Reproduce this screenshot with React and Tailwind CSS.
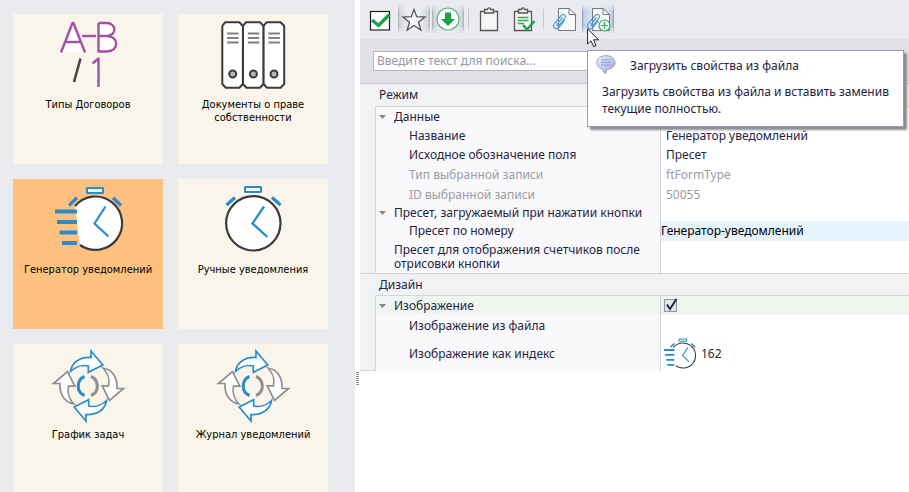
import React from "react";

const BLUE = "#2a8ccf";
const DARK = "#3b3b3b";
const PURPLE = "#a352a3";

function TypesIcon() {
  return (
    <svg width="80" height="80" viewBox="48 18 80 80" fill="none" aria-hidden="true">
      <path d="M73 23L62 52H84Z" fill="#fff" />
      <path d="M99 23H106C116 24 115 35 109 36C119 39 117 51 108 51H99Z" fill="#fff" />
      <path d="M93 64L98 59V82Z" fill="#fff" />
      <g stroke={PURPLE} strokeWidth="2.4" strokeLinejoin="round">
        <path d="M61 52.500L72.500 23H73.500L85 52.500M65.500 42H81" />
        <path d="M82 36H96" />
        <path d="M98.500 23H106.500C117 23 117 36 106.500 36H98.500M106.500 36C119.500 36 119.500 51.500 106.500 51.500H98.500V23" />
        <path d="M92.500 63.500L98.500 58.500V87" />
      </g>
      <path d="M80.500 58.500L74 82" stroke="#4a4a4a" strokeWidth="2.600" />
    </svg>
  );
}

function BinderIcon() {
  return (
    <svg width="80" height="80" viewBox="213 18 80 80" fill="none" aria-hidden="true">
      {[222.3, 243, 263.6].map((x) => (
        <g key={x}>
          <path
            d={`M${x + 3} 22.200H${x + 17}L${x + 20.6} 26V84L${x + 17} 87.800H${x + 3.500}L${x} 84V26Z`}
            fill="#fff"
            stroke={DARK}
            strokeWidth="2"
            strokeLinejoin="round"
          />
          <path d={`M${x + 4.800} 33.500h11.500m-11.500 4.500h11.500m-11.500 4.600h11.500`} stroke="#808080" strokeWidth="2" />
          <circle cx={x + 10.4} cy="74" r="3.500" fill="#b5b5b5" stroke={DARK} strokeWidth="2" />
        </g>
      ))}
    </svg>
  );
}

function ClockIcon() {
  return (
    <svg width="80" height="80" viewBox="213 183 80 80" fill="none" aria-hidden="true">
      <circle cx="253.300" cy="223.300" r="27.200" fill="#fff" stroke={DARK} strokeWidth="2.200" />
      <rect x="245" y="187" width="16" height="5" rx="0.500" stroke={BLUE} strokeWidth="2" />
      <path d="M226.500 205L235 197.500M272 197.500L280.500 205" stroke={BLUE} strokeWidth="3.400" />
      <path d="M264 206.500L252.500 223.500L267.500 237" stroke={BLUE} strokeWidth="2.300" />
    </svg>
  );
}

function FastClockIcon({ small = false }) {
  return (
    <svg
      width={small ? 32 : 80}
      height={small ? 32 : 80}
      viewBox={small ? "55 186 68 68" : "48 183 80 80"}
      fill="none"
      className="shrink-0"
      aria-hidden="true"
    >
      <path d="M75 206A26.500 26.500 0 1 1 80 245Z" fill="#fff" />
      <path d="M75 206A26.700 26.700 0 1 1 80 245" stroke={DARK} strokeWidth="2.200" />
      <rect x="87" y="188" width="16" height="5" rx="0.500" fill="#fff" stroke={BLUE} strokeWidth="2.200" />
      <path d="M69 205.500L77 197.800M113 197.800L121 205.500" stroke={BLUE} strokeWidth="3.300" />
      <path d="M105.500 206.500L94.500 223.500L108.500 236.500" stroke={BLUE} strokeWidth="2.200" />
      <path d="M55 211.500H77M57 222H77M59.500 232.500H77M62 243H77" stroke={BLUE} strokeWidth="3.800" />
    </svg>
  );
}

function CycleIcon() {
  const arrow = "M70.500 371.500C72 362 80 357 91 357.500V351L102.800 365L88.300 372.300V366C82 364.500 75 367 70.500 371.500Z";
  return (
    <svg width="80" height="80" viewBox="48 348 80 80" fill="none" aria-hidden="true">
      <g fill="#fff" strokeWidth="1.700">
        <path d={arrow} stroke="#8f8f8f" transform="rotate(90 88.500 386)" />
        <path d={arrow} stroke="#8f8f8f" transform="rotate(270 88.500 386)" />
        <path d={arrow} stroke={BLUE} />
        <path d={arrow} stroke={BLUE} transform="rotate(180 88.500 386)" />
      </g>
      <path d="M84.500 376.500A10.300 10.300 0 0 0 84.500 395.500" stroke={BLUE} strokeWidth="3" />
      <path d="M91 376.500A10.300 10.300 0 0 1 91 395.500" stroke="#8f8f8f" strokeWidth="3" />
    </svg>
  );
}

const tiles = [
  { lines: ["Типы Договоров"], Icon: TypesIcon },
  { lines: ["Документы о праве", "собственности"], Icon: BinderIcon },
  { lines: ["Генератор уведомлений"], Icon: FastClockIcon, active: true },
  { lines: ["Ручные уведомления"], Icon: ClockIcon },
  { lines: ["График задач"], Icon: CycleIcon },
  { lines: ["Журнал уведомлений"], Icon: CycleIcon },
];

function Tile({ lines, Icon, active }) {
  return (
    <button
      type="button"
      className={`flex h-[150px] w-[150px] flex-col items-center pt-1 text-center font-['DejaVu_Sans_Condensed','DejaVu_Sans',sans-serif] text-[11px] leading-[13px] whitespace-nowrap text-black ${active ? "bg-[#ffc180]" : "bg-[#f9f5ea]"}`}
    >
      <Icon />
      {lines.map((line) => (
        <span key={line}>{line}</span>
      ))}
    </button>
  );
}

const pressedGray =
  "bg-[linear-gradient(to_bottom,#eaebef,transparent_25%,transparent_75%,#eaebef),linear-gradient(to_right,#a9adb8,#d3d6dd_2px,#eceef1_10px,#f1f2f4_16px,#eceef1_22px,#d3d6dd_30px,#a9adb8)]";
const pressedBlue =
  "bg-[linear-gradient(to_bottom,#eaebef,transparent_25%,transparent_75%,#eaebef),linear-gradient(to_right,#8f96aa,#c5d0ea_2px,#d9e1f5_10px,#e4eaf8_16px,#d9e1f5_22px,#c5d0ea_30px,#8f96aa)]";

function ToolButton({ label, className = "", children }) {
  return (
    <button type="button" aria-label={label} className={`flex h-[30px] w-8 items-center justify-center ${className}`}>
      <svg width="26" height="26" viewBox="0 0 26 26" fill="none" aria-hidden="true">
        {children}
      </svg>
    </button>
  );
}

function Separator() {
  return (
    <div className="flex h-[30px] w-[5px] justify-center">
      <div className="w-px bg-[linear-gradient(to_bottom,transparent,#c6c8cf_30%,#c6c8cf_70%,transparent)]" />
    </div>
  );
}

const clipboard = "M4.500 5.500H8.500V3.500H11.500C11.500 1.200 14.500 1.200 14.500 3.500H17.500V5.500H21.500V24.500H4.500Z M8.500 5.500V7H17.500V5.500";

function FileClip() {
  return (
    <>
      <path d="M7.500 2.500H18L24.500 8.500V24.500H7.500Z" fill="#fafafa" stroke="#777" />
      <path d="M18 2.500V8.500H24.500" stroke="#777" />
      <path
        d="M11.500 11.500L6.500 17.500C5.200 19.200 7 20.400 8.200 19L13.800 12.300C16 9.600 12.500 6.800 10.300 9.500L3.500 17.500C0.600 21.200 5.200 24.700 8 21.300L13.500 14.600"
        stroke="#4b9fd8"
        strokeWidth="1.200"
      />
    </>
  );
}

function Tooltip() {
  return (
    <div
      role="tooltip"
      className="absolute top-[46px] left-[5px] z-10 w-[317px] border border-[#9a9cab] bg-white px-[14px] pt-1 pb-[9px] text-[12px] leading-[17px] text-[#25233f] shadow-[3px_3px_2px_#8a8c93]"
    >
      <div className="-ml-[6px] flex items-center gap-[14px]">
        <svg width="20" height="20" viewBox="0 0 20 20" aria-hidden="true">
          <defs>
            <linearGradient id="bubble" x1="0" y1="0" x2="1" y2="1">
              <stop offset="0" stopColor="#f2f3ff" />
              <stop offset="0.600" stopColor="#c0c2f2" />
              <stop offset="1" stopColor="#8d8fd0" />
            </linearGradient>
          </defs>
          <path
            d="M10 0.700C15 0.700 19 3.500 19 7.700C19 11.500 15 14 10.800 14.300L9.500 19L5.500 13.700C2.500 12.500 0.800 10.500 0.800 7.700C0.800 3.500 5 0.700 10 0.700Z"
            fill="url(#bubble)"
            stroke="#9a9bb8"
          />
          <path d="M5 5H14.500M5 7.500H14.500M5 10H14.500" stroke="#9a9cc4" />
        </svg>
        <span>Загрузить свойства из файла</span>
      </div>
      <p className="mt-2 whitespace-nowrap">
        Загрузить свойства из файла и вставить заменив
        <br />
        текущие полностью.
      </p>
    </div>
  );
}

function Cursor() {
  return (
    <svg className="pointer-events-none absolute top-6 left-[5px] z-20" width="14" height="21" viewBox="0 0 14 21" aria-hidden="true">
      <path d="M0.600 0.800V16L4 12.800L6.700 18.700L9 17.600L6.500 11.800H11.500Z" fill="#fff" stroke="#222" />
    </svg>
  );
}

function Toolbar() {
  return (
    <div className="flex h-[39px] items-start gap-[2px] bg-[#eaebef] pt-1 pl-1">
      <ToolButton label="Применить">
        <rect x="3.500" y="5.500" width="19" height="18.500" fill="#fff" stroke="#222" strokeWidth="1.200" />
        <path d="M5 14L11.500 19.500L22.500 8.500" stroke="#17a349" strokeWidth="3.400" />
      </ToolButton>
      <ToolButton label="Избранное" className={pressedGray}>
        <path
          d="M13 3.500L15.700 10.700L24 11L17.500 16.200L19.900 24.200L13 19.500L6.100 24.200L8.500 16.200L2 11L10.300 10.700Z"
          fill="#f4f5f6"
          stroke="#555"
          strokeWidth="1.300"
        />
      </ToolButton>
      <ToolButton label="Загрузить" className={pressedGray}>
        <circle cx="13" cy="13" r="11" fill="#fff" stroke="#57b877" strokeWidth="1.200" />
        <path d="M10 6.500H16V13H20L13 20L6 13H10Z" fill="#17a349" />
      </ToolButton>
      <Separator />
      <ToolButton label="Вставить">
        <path d={clipboard} fill="#f4f5f7" stroke="#555" strokeWidth="1.300" />
      </ToolButton>
      <ToolButton label="Вставить с проверкой">
        <path d={clipboard} fill="#f4f5f7" stroke="#555" strokeWidth="1.300" />
        <path d="M7.500 11.500H18.500M7.500 14.500H18.500M7.500 17.500H14" stroke="#35ac5e" strokeWidth="1.400" />
        <path d="M13 19L17 23.500L24.500 15" stroke="#17a349" strokeWidth="2.400" />
      </ToolButton>
      <Separator />
      <ToolButton label="Сохранить свойства в файл">
        <FileClip />
      </ToolButton>
      <div className="relative">
        <ToolButton label="Загрузить свойства из файла" className={pressedBlue}>
          <FileClip />
          <circle cx="19.500" cy="19.500" r="5.500" fill="#f3f8f4" stroke="#35ac5e" strokeWidth="1.200" />
          <path d="M19.500 16V23M16 19.500H23" stroke="#35ac5e" strokeWidth="1.200" />
        </ToolButton>
        <Cursor />
        <Tooltip />
      </div>
    </div>
  );
}

function Group({ children }) {
  return (
    <button type="button" aria-expanded="true" className="flex items-center gap-2 pl-[3px] text-left">
      <svg width="7" height="4" viewBox="0 0 7 4" aria-hidden="true">
        <path d="M0 0H7L3.500 4Z" fill="#85878f" />
      </svg>
      {children}
    </button>
  );
}

function Row({ height, label, tone = "bg-[#f9f9fb]", valueTone = "bg-white", children }) {
  return (
    <tr className={height}>
      <th scope="row" className={`border-r border-[#d3d4da] p-0 text-left align-middle font-normal ${tone}`}>
        {label}
      </th>
      <td className={`p-0 align-middle ${valueTone}`}>{children}</td>
    </tr>
  );
}

function Field({ id, value, disabled, className = "pl-[5px]" }) {
  return (
    <input
      id={id}
      type="text"
      defaultValue={value}
      disabled={disabled}
      className={`block h-[14px] w-full bg-transparent leading-[14px] outline-none disabled:text-[#9b9ca3] ${className}`}
    />
  );
}

function Grid({ children, last = false }) {
  return (
    <div className="flex">
      <div className={`w-[15px] shrink-0 ${last ? "border-b border-[#d3d4da]" : ""}`} />
      <div className="min-w-0 flex-1 border-t border-l border-[#d3d4da]">
        <table className="w-full table-fixed border-separate border-spacing-0">
          <colgroup>
            <col className="w-[285px]" />
            <col />
          </colgroup>
          <tbody>{children}</tbody>
        </table>
      </div>
    </div>
  );
}

export default function App() {
  return (
    <div className="flex h-screen overflow-hidden bg-white font-['Noto_Sans','Open_Sans',sans-serif] text-[12px] leading-[14px] text-[#25233f]">
      <nav className="w-[355px] shrink-0 overflow-hidden bg-[#eaebef]">
        <div className="grid grid-cols-[150px_150px] content-start gap-[15px] pt-[14px] pl-[13px]">
          {tiles.map((t) => (
            <Tile key={t.lines[0]} {...t} />
          ))}
        </div>
      </nav>

      <div className="w-[5px] shrink-0 pt-[372px] pl-px">
        <div className="h-[14px] w-[3px] bg-[repeating-linear-gradient(to_bottom,#8c8c92_0_1px,#ffffff_1px_2px)]" />
      </div>

      <main className="min-w-0 flex-1">
        <Toolbar />
        <div className="h-[45px] border-b border-[#c9cad2] bg-[#e0e1e6] px-[13px] pt-3">
          <input
            type="search"
            aria-label="Поиск"
            placeholder="Введите текст для поиска..."
            className="block h-5 w-full border border-[#b4b6c1] bg-white px-[3px] pb-[2px] text-[12px] outline-none placeholder:text-[#9497a1]"
          />
        </div>

        <div className="bg-[#f1f2f4]">
          <h2 className="flex h-[22px] items-center pl-[19px]">Режим</h2>
          <Grid>
            <Row height="h-[19px]" label={<Group>Данные</Group>} />
            <Row height="h-[19px]" label={<label htmlFor="name" className="pl-[33px]">Название</label>}>
              <Field id="name" value="Генератор уведомлений" />
            </Row>
            <Row height="h-[20px]" label={<label htmlFor="field" className="pl-[33px]">Исходное обозначение поля</label>}>
              <Field id="field" value="Пресет" />
            </Row>
            <Row height="h-[20px]" label={<label htmlFor="type" className="pl-[33px] text-[#9b9ca3]">Тип выбранной записи</label>}>
              <Field id="type" value="ftFormType" disabled />
            </Row>
            <Row height="h-[19px]" label={<label htmlFor="rid" className="pl-[33px] text-[#9b9ca3]">ID выбранной записи</label>}>
              <Field id="rid" value="50055" disabled />
            </Row>
            <Row height="h-[17px]" label={<Group>Пресет, загружаемый при нажатии кнопки</Group>} />
            <Row
              height="h-[20px]"
              label={<label htmlFor="preset" className="pl-[33px]">Пресет по номеру</label>}
              valueTone="bg-[#e4f3fc]"
            >
              <Field id="preset" value="Генератор-уведомлений" className="text-black" />
            </Row>
            <Row
              height="h-[32px]"
              label={
                <label htmlFor="counter" className="block pl-[18px]">
                  Пресет для отображения счетчиков после отрисовки кнопки
                </label>
              }
            >
              <Field id="counter" value="" />
            </Row>
          </Grid>
          <h2 className="flex h-[22px] items-center border-t border-[#d3d4da] pl-[19px]">Дизайн</h2>
          <Grid last>
            <Row height="h-[19px]" label={<Group>Изображение</Group>} tone="bg-[#eff6f0]" valueTone="bg-[#eff6f0]">
              <div className="relative ml-[3px] h-[13px] w-[14px]">
                <input
                  type="checkbox"
                  defaultChecked
                  aria-label="Изображение"
                  className="peer block h-[13px] w-[13px] appearance-none border border-[#9496a3] bg-[#e3e4ea]"
                />
                <svg
                  className="pointer-events-none absolute -top-px left-0 hidden peer-checked:block"
                  width="14"
                  height="14"
                  viewBox="0 0 14 14"
                  fill="none"
                  aria-hidden="true"
                >
                  <path d="M3 6.500L6 11L12.500 1" stroke="#25233f" strokeWidth="2" />
                </svg>
              </div>
            </Row>
            <Row height="h-[21px]" label={<label htmlFor="file" className="pl-[33px]">Изображение из файла</label>}>
              <Field id="file" value="" />
            </Row>
            <Row height="h-[35px]" label={<label htmlFor="index" className="pl-[33px]">Изображение как индекс</label>}>
              <div className="flex items-center gap-[5px] pl-[3px]">
                <FastClockIcon small />
                <Field id="index" value="162" className="" />
              </div>
            </Row>
          </Grid>
        </div>
      </main>
    </div>
  );
}
